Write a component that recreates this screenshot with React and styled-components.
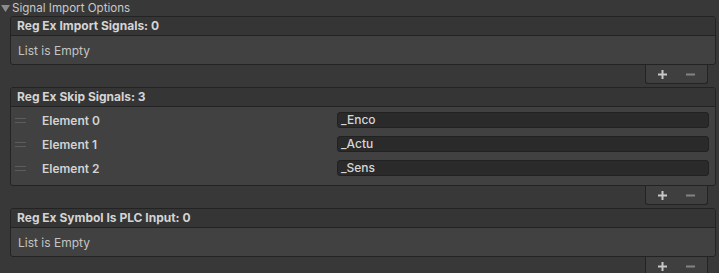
import React from "react";
import styled, { createGlobalStyle } from "styled-components";

const GlobalStyle = createGlobalStyle`
  html, body {
    margin: 0;
    padding: 0;
    background: #383838;
  }
  body {
    font-family: Inter, "Noto Sans", "Liberation Sans", sans-serif;
    font-size: 12px;
    color: #d2d2d2;
  }
`;

const Inspector = styled.div`
  width: 719px;
  height: 273px;
  overflow: hidden;
  background: #383838;
`;

const Foldout = styled.div`
  display: flex;
  align-items: center;
  height: 16px;
  gap: 2px;
  color: #c8c8c8;
  font-size: 11.6px;
  line-height: 16px;
  .arrow {
    width: 9px;
    height: 9px;
    margin-left: 1px;
    margin-top: 1px;
  }
`;

const Lists = styled.div`
  padding: 0 3px 0 10px;
`;

const ListBlock = styled.div`
  margin-bottom: 3px;
`;

const Box = styled.div`
  border: 1px solid #232323;
  border-radius: 3px;
  overflow: hidden;
  background: #414141;
`;

const Header = styled.div`
  height: 18px;
  line-height: 18px;
  padding-left: 6px;
  background: #353535;
  border-bottom: 1px solid #232323;
  font-weight: 700;
  color: #d4d4d4;
`;

const EmptyBody = styled.div`
  height: 24px;
  padding-top: 4px;
  line-height: 22px;
  padding-left: 7px;
  color: #c4c4c4;
`;

const Body = styled.div`
  padding: 1px 0 5px;
`;

const Row = styled.div`
  display: grid;
  grid-template-columns: 31px 295px 1fr;
  align-items: center;
  height: 24px;
  padding-right: 6px;
`;

const Handle = styled.div`
  width: 11px;
  height: 3px;
  margin-left: 4px;
  margin-top: 1px;
  border-top: 1px solid #5c5c5c;
  border-bottom: 1px solid #5c5c5c;
`;

const Label = styled.span`
  font-weight: 600;
  color: #d2d2d2;
`;

const Field = styled.div`
  height: 14px;
  line-height: 14px;
  padding: 0 3px;
  background: #2a2a2a;
  border: 1px solid #212121;
  border-radius: 3px;
  color: #d6d6d6;
  font-weight: 500;
`;

const Footer = styled.div`
  display: flex;
  justify-content: flex-end;
  padding-right: 8px;
`;

const FooterBox = styled.div`
  display: flex;
  align-items: center;
  justify-content: space-around;
  width: 57px;
  height: 18px;
  background: #3f3f3f;
  border: 1px solid #232323;
  border-top: none;
  border-radius: 0 0 3px 3px;
  padding: 0 2px;
`;

const Plus = () => (
  <svg width="11" height="11" viewBox="0 0 11 11">
    <rect x="4.5" y="1" width="2" height="9" fill="#c8c8c8" />
    <rect x="1" y="4.5" width="9" height="2" fill="#c8c8c8" />
  </svg>
);

const Minus = () => (
  <svg width="11" height="11" viewBox="0 0 11 11">
    <rect x="1" y="4.5" width="9" height="2" fill="#838383" />
  </svg>
);

function ListFooter() {
  return (
    <Footer>
      <FooterBox>
        <Plus />
        <Minus />
      </FooterBox>
    </Footer>
  );
}

function ReorderableList({ title, items }) {
  return (
    <ListBlock>
      <Box>
        <Header>
          {title}: {items.length}
        </Header>
        {items.length === 0 ? (
          <EmptyBody>List is Empty</EmptyBody>
        ) : (
          <Body>
            {items.map((value, i) => (
              <Row key={i}>
                <Handle />
                <Label>Element {i}</Label>
                <Field>{value}</Field>
              </Row>
            ))}
          </Body>
        )}
      </Box>
      <ListFooter />
    </ListBlock>
  );
}

export default function App() {
  return (
    <Inspector>
      <GlobalStyle />
      <Foldout>
        <svg className="arrow" viewBox="0 0 9 9">
          <polygon points="0,1 9,1 4.5,8" fill="#8c8c8c" />
        </svg>
        Signal Import Options
      </Foldout>
      <Lists>
        <ReorderableList title="Reg Ex Import Signals" items={[]} />
        <ReorderableList
          title="Reg Ex Skip Signals"
          items={["_Enco", "_Actu", "_Sens"]}
        />
        <ReorderableList title="Reg Ex Symbol Is PLC Input" items={[]} />
      </Lists>
    </Inspector>
  );
}
